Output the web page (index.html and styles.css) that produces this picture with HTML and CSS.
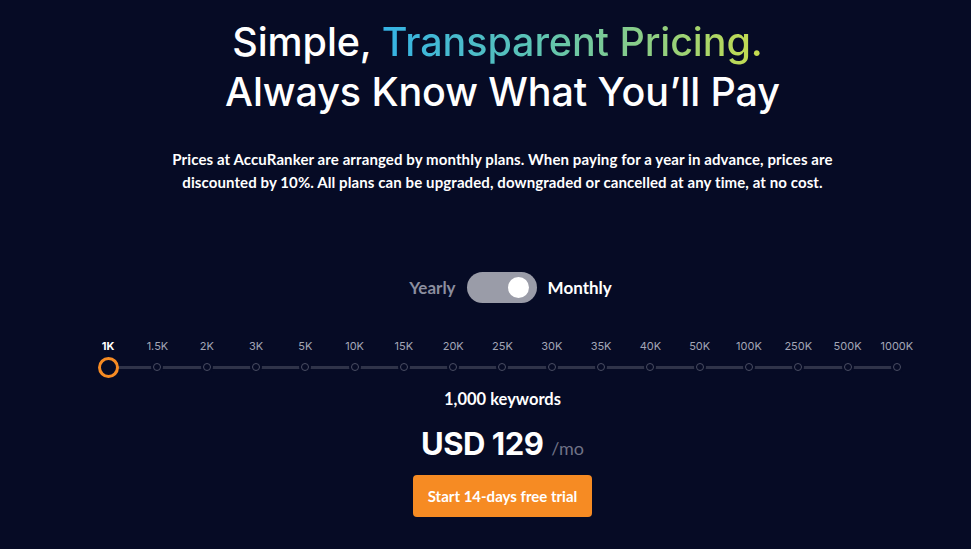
FILE: index.html
```html
<!DOCTYPE html>
<html>
<head>
<meta charset="utf-8">
<link rel="stylesheet" href="styles.css">
</head>
<body>
<main class="pricing">
  <h1 class="title">
    <span class="line first">Simple, <span class="grad">Transparent Pricing.</span></span>
    <span class="line">Always Know What You’ll Pay</span>
  </h1>
  <p class="lead">Prices at AccuRanker are arranged by monthly plans. When paying for a year in advance, prices are discounted by 10%. All plans can be upgraded, downgraded or cancelled at any time, at no cost.</p>

  <div class="toggle">
    <span class="opt off">Yearly</span>
    <span class="switch"><span class="knob"></span></span>
    <span class="opt on">Monthly</span>
  </div>

  <div class="slider">
    <div class="labels">
      <span class="active">1K</span><span>1.5K</span><span>2K</span><span>3K</span><span>5K</span><span>10K</span><span>15K</span><span>20K</span><span>25K</span><span>30K</span><span>35K</span><span>40K</span><span>50K</span><span>100K</span><span>250K</span><span>500K</span><span>1000K</span>
    </div>
    <div class="track">
      <span class="dot active"></span><span class="dot"></span><span class="dot"></span><span class="dot"></span><span class="dot"></span><span class="dot"></span><span class="dot"></span><span class="dot"></span><span class="dot"></span><span class="dot"></span><span class="dot"></span><span class="dot"></span><span class="dot"></span><span class="dot"></span><span class="dot"></span><span class="dot"></span><span class="dot"></span>
    </div>
  </div>

  <div class="keywords">1,000 keywords</div>
  <div class="price"><span class="amount">USD 129</span><span class="per">/mo</span></div>
  <a class="cta" href="#">Start 14-days free trial</a>
</main>
</body>
</html>
```
FILE: styles.css
```css
html, body {
  margin: 0;
  padding: 0;
  background: #060b25;
  color: #fff;
  font-family: "Lato", "Open Sans", sans-serif;
}
.pricing {
  width: 971px;
  height: 549px;
  display: flex;
  flex-direction: column;
  align-items: center;
  padding-top: 17px;
  padding-left: 34px;
  box-sizing: border-box;
}
.title {
  margin: 0;
  font-family: "Inter", sans-serif;
  font-weight: 500;
  font-size: 39.5px;
  line-height: 50px;
  letter-spacing: -0.1px;
  text-align: center;
}
.line { display: block; }
.line.first { padding-right: 10px; }
.grad {
  background: linear-gradient(90deg, #35b3e6 0%, #5cc3b4 40%, #95d07c 75%, #c8dd4c 100%);
  -webkit-background-clip: text;
  background-clip: text;
  color: transparent;
}
.lead {
  margin: 31px 0 0;
  width: 680px;
  font-size: 15px;
  font-weight: 700;
  letter-spacing: 0.1px;
  line-height: 23px;
  text-align: center;
}
.toggle {
  margin-top: 78px;
  margin-left: 16px;
  display: flex;
  align-items: center;
  gap: 11px;
  font-size: 17px;
  font-weight: 700;
}
.opt.off { color: #8b8e9f; }
.opt.on { color: #fff; }
.switch {
  width: 70px;
  height: 31px;
  border-radius: 16px;
  background: #9a9ca8;
  display: flex;
  align-items: center;
  justify-content: flex-end;
  padding: 0 8px;
  box-sizing: border-box;
}
.knob {
  width: 21px;
  height: 21px;
  border-radius: 50%;
  background: #fff;
}
.slider {
  margin-top: 36px;
  width: 838px;
  display: flex;
  flex-direction: column;
}
.labels {
  display: grid;
  grid-template-columns: repeat(17, 1fr);
  font-family: "Inter", sans-serif;
  font-size: 11px;
  color: #a3a6b6;
  text-align: center;
  line-height: 14px;
}
.labels .active { color: #fff; font-weight: 700; }
.track {
  margin-top: 3px;
  position: relative;
  height: 22px;
  display: grid;
  grid-template-columns: repeat(17, 1fr);
  align-items: center;
  justify-items: center;
}
.track::before {
  content: "";
  position: absolute;
  left: 25px;
  right: 25px;
  top: 10px;
  height: 3px;
  background: #2f3349;
}
.dot {
  position: relative;
  width: 6px;
  height: 6px;
  border-radius: 50%;
  border: 1px solid #4a4e63;
  background: #060b25;
  box-shadow: 0 0 0 2px #060b25;
}
.dot.active {
  width: 15px;
  height: 15px;
  border: 3px solid #f68b23;
  box-shadow: none;
}
.keywords {
  margin-top: 10px;
  font-size: 16.5px;
  font-weight: 700;
  line-height: 22px;
}
.price {
  margin-top: 15px;
  display: flex;
  align-items: baseline;
  gap: 8px;
}
.amount {
  font-family: "Inter", sans-serif;
  font-size: 31px;
  font-weight: 700;
  letter-spacing: -0.5px;
}
.per {
  font-size: 18px;
  color: #6f7285;
}
.cta {
  margin-top: 13px;
  width: 179px;
  height: 42px;
  display: flex;
  align-items: center;
  justify-content: center;
  background: #f68b23;
  border-radius: 4px;
  color: #fff;
  text-decoration: none;
  font-size: 15px;
  font-weight: 700;
}
```
